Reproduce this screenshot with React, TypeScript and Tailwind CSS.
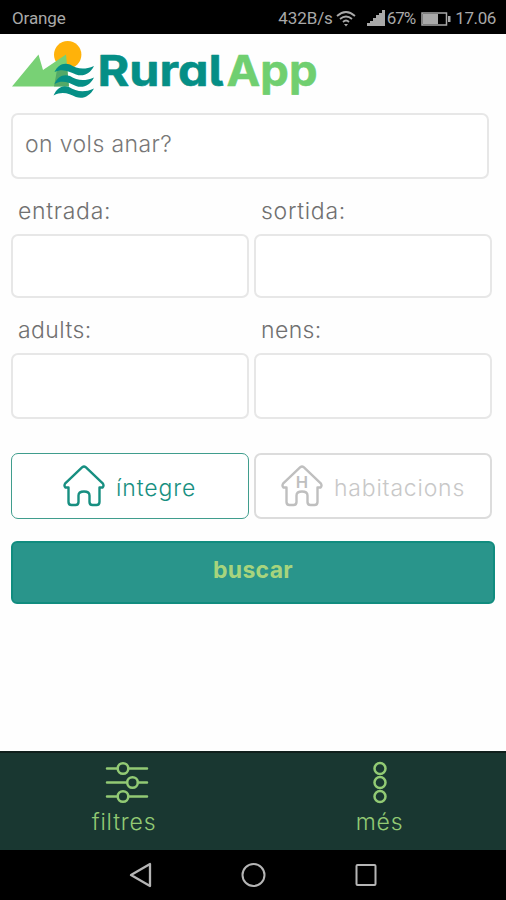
import React from "react";

function StatusBar() {
  return (
    <header className="flex h-[34px] shrink-0 items-center bg-black pl-3 pr-[10px] pt-[3px] font-['Roboto',sans-serif] text-[17px] font-normal text-[#a9a9a9]">
      <span className="w-[54px] whitespace-nowrap tracking-[-0.1px]">Orange</span>
      <span className="ml-auto whitespace-nowrap tracking-[-0.1px]">432B/s</span>
      <svg className="ml-[3px]" width="20" height="18" viewBox="0 0 20 18" fill="none" stroke="#a9a9a9" strokeWidth="1.8">
        <path d="M1 6Q10-2 19 6M4 9Q10 4 16 9M7 12Q10 9 13 12" />
        <path d="M8 14h4l-2 2.5z" fill="#a9a9a9" stroke="none" />
      </svg>
      <svg className="ml-[11px]" width="18" height="17" viewBox="0 0 18 17" fill="#a9a9a9">
        <path d="M0 16V13H3V11H6V8H9V5H12V3H15V0H18V16Z" />
      </svg>
      <span className="ml-[2px] whitespace-nowrap tracking-[-1px]">67%</span>
      <svg className="ml-[6px]" width="30" height="14" viewBox="0 0 30 14">
        <rect x="1" y="1" width="24.5" height="12" fill="none" stroke="#a9a9a9" strokeWidth="1.5" />
        <path d="M2 2H17V12H2ZM27 4H29.5V10H27Z" fill="#a9a9a9" />
      </svg>
      <span className="ml-[4px] whitespace-nowrap tracking-[-0.4px]">17.06</span>
    </header>
  );
}

function Logo() {
  return (
    <svg className="block" width="330" height="68" viewBox="0 34 330 68" role="img" aria-label="RuralApp">
      <circle cx="67.7" cy="54.8" r="13.7" fill="#ffb20a" />
      <path d="M12 86.500L38.500 54.500L43 70L66 54.500L69 86.500Z" fill="#78d175" />
      <path d="M57 70L67 66L69 86.500H54Z" fill="#479b63" opacity=".75" />
      <g fill="#058f86">
        <path d="M54.500 72C57.500 65.500 63 62 70 64.500C77 68.500 83 70.500 94 66C90 74 83 77 76 74.500C69 71.500 63 68 54.500 72Z" />
        <path d="M54.500 84C57.500 77 63 73.500 70 76C77 80 83 82 94 77.500C90 85.500 83 88.500 76 86C69 83 63 79.500 54.500 84Z" />
        <path d="M53.500 95.500C57 88 62 84.500 69 87C76 91 83 93.500 94 88.500C90 96 83 99.500 76 97C69 94 63 90.500 53.500 95.500Z" />
      </g>
      <g className="font-['Inter',sans-serif] font-bold [font-feature-settings:'cv05','cv11','ss02'_0]" fontSize="43" strokeWidth="0.6" strokeLinejoin="round">
        <text x="97.500" y="86.300" fill="#058f86" stroke="#058f86" textLength="126" lengthAdjust="spacingAndGlyphs">Rural</text>
        <text x="226.500" y="86.300" fill="#70cf70" stroke="#70cf70" textLength="91" lengthAdjust="spacingAndGlyphs">App</text>
      </g>
    </svg>
  );
}

function HouseIcon({ letter }: { letter?: string }) {
  return (
    <svg width="42" height="42" viewBox="0 0 42 42" fill="none" stroke="currentColor" strokeWidth="2.4" strokeLinejoin="round" strokeLinecap="round">
      <path d="M19.3 2.2Q21 .9 22.7 2.2L40 18.7Q41.2 21 39.5 22.5H36.5V37Q36.500 40 33.500 40H29.500Q26.500 40 26.500 37V30.500Q26.500 26.500 21 26.500Q15.500 26.500 15.500 30.500V37Q15.500 40 12.500 40H8.500Q5.500 40 5.500 37V22.500H2.500Q.8 21 2 18.700Z" />
      {letter && (
        <text x="21" y="22.800" textAnchor="middle" fontFamily="Inter, sans-serif" fontSize="16.500" fontWeight="600" fill="currentColor" stroke="none">{letter}</text>
      )}
    </svg>
  );
}

function Field({ label, height }: { label: string; height: string }) {
  return (
    <label className="block">
      <span className="block h-[39px] whitespace-nowrap pl-[7px] text-[23px] leading-[32px] text-[#707070]">{label}</span>
      <input aria-label={label} className={`block w-full rounded-[7px] border-2 border-[#e7e7e7] bg-white outline-none ${height}`} />
    </label>
  );
}

export default function App() {
  return (
    <div className="flex h-[900px] w-[506px] flex-col overflow-hidden bg-[#fefefe] font-['Inter',sans-serif] font-light">
      <StatusBar />
      <main className="flex flex-1 flex-col">
        <Logo />
        <div className="ml-[11px] mt-[11px]">
          <input
            aria-label="on vols anar?"
            placeholder="on vols anar?"
            className="block h-[66px] w-[478px] rounded-[7px] border-2 border-[#e7e7e7] bg-white pb-[4px] pl-[12px] text-[23px] font-light tracking-[0.4px] outline-none placeholder:text-[#777]"
          />
          <div className="mt-[16px] grid w-[482px] grid-cols-[238px_238px] gap-x-[5px] tracking-[0.7px]">
            <Field label="entrada:" height="h-[64px]" />
            <Field label="sortida:" height="h-[64px]" />
          </div>
          <div className="mt-[16px] grid w-[482px] grid-cols-[238px_238px] gap-x-[5px] tracking-[0.4px]">
            <Field label="adults:" height="h-[66px]" />
            <Field label="nens:" height="h-[66px]" />
          </div>
          <div className="mt-[34px] grid w-[482px] grid-cols-[238px_238px] gap-x-[5px] text-[23px]">
            <button className="flex h-[66px] items-center rounded-[7px] border-[1.5px] border-[#409d8d] bg-white pl-[51px] text-[#178f81]">
              <HouseIcon />
              <span className="ml-[11px] pt-[4px] tracking-[0.9px]">íntegre</span>
            </button>
            <button className="flex h-[66px] items-center rounded-[7px] border-2 border-[#dcdcdc] bg-white pl-[25px] text-[#bfbfbf]">
              <HouseIcon letter="H" />
              <span className="ml-[11px] pt-[4px] tracking-[0.8px] text-[#c8c8c8]">habitacions</span>
            </button>
          </div>
          <button className="mt-[22px] block h-[63px] w-[484px] rounded-[6px] border-2 border-[#118c7f] bg-[#29958b] pb-[4px] text-[23px] font-bold tracking-[0.3px] text-[#a7d47d]">buscar</button>
        </div>
      </main>
      <nav className="flex h-[99px] shrink-0 border-t-2 border-[#101f1c] bg-[#193731] text-[23px] text-[#92ca74]">
        <button className="flex w-[248px] flex-col items-center pt-[7px]">
          <svg className="ml-[6px]" width="44" height="44" viewBox="0 0 44 44" fill="none" stroke="currentColor" strokeWidth="2.500" strokeLinecap="round">
            <path d="M2 8.500H12M24 8.500H42M2 22.500H21M33 22.500H42M2 36.500H12M24 36.500H42" />
            <circle cx="18" cy="8.500" r="5.300" />
            <circle cx="27.500" cy="22.500" r="5.300" />
            <circle cx="18" cy="36.500" r="5.300" />
          </svg>
          <span className="mt-[2px] leading-[32px] tracking-[0.8px]">filtres</span>
        </button>
        <button className="ml-[5px] flex w-[253px] flex-col items-center pt-[7px]">
          <svg width="44" height="44" viewBox="0 0 44 44" fill="none" stroke="currentColor" strokeWidth="2.500">
            <circle cx="22" cy="8.500" r="5.500" />
            <circle cx="22" cy="22.500" r="5.500" />
            <circle cx="22" cy="36.500" r="5.500" />
          </svg>
          <span className="mt-[2px] leading-[32px] tracking-[0.8px]">més</span>
        </button>
      </nav>
      <footer className="flex h-[50px] shrink-0 items-center justify-center gap-[86px] bg-black">
        <svg width="26" height="26" viewBox="0 0 26 26" fill="none" stroke="#b5b5b5" strokeWidth="2.300" strokeLinejoin="round"><path d="M22 2V24L3 13Z" /></svg>
        <svg width="26" height="26" viewBox="0 0 26 26" fill="none" stroke="#b5b5b5" strokeWidth="2"><circle cx="13.500" cy="13" r="11" /></svg>
        <svg width="26" height="26" viewBox="0 0 26 26" fill="none" stroke="#b5b5b5" strokeWidth="2"><rect x="4.500" y="3" width="19" height="20" rx="1" /></svg>
      </footer>
    </div>
  );
}
